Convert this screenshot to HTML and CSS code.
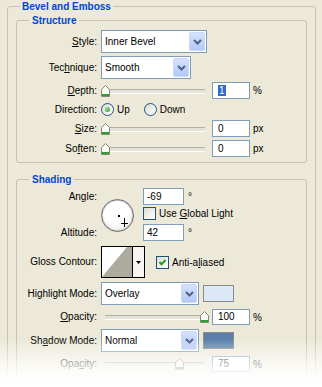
FILE: index.html
```html
<!DOCTYPE html>
<html lang="en">
<head>
    <meta charset="UTF-8">
    <meta name="viewport" content="width=device-width, initial-scale=1.0">
    <title>Layer Style - Bevel and Emboss</title>
    <link rel="stylesheet" href="styles.css">
</head>
<body>
    <fieldset class="group">
        <legend>Bevel and Emboss</legend>

        <fieldset class="sub structure">
            <legend>Structure</legend>
            <div class="rows structure-rows">
                <span class="lbl tall"><u>S</u>tyle:</span>
                <div class="select w-style">
                    <span class="val">Inner Bevel</span>
                    <span class="drop"><svg width="9" height="6" viewBox="0 0 9 6"><path d="M1 1l3.5 3.5L8 1" fill="none" stroke="#4d6185" stroke-width="2"/></svg></span>
                </div>

                <span class="lbl tall">Tec<u>h</u>nique:</span>
                <div class="select w-tech">
                    <span class="val">Smooth</span>
                    <span class="drop"><svg width="9" height="6" viewBox="0 0 9 6"><path d="M1 1l3.5 3.5L8 1" fill="none" stroke="#4d6185" stroke-width="2"/></svg></span>
                </div>

                <span class="lbl"><u>D</u>epth:</span>
                <div class="line">
                    <div class="slider"><span class="thumb" style="left: 0px"><svg width="9" height="12" viewBox="0 0 9 12"><path d="M.5 4.5l4-4 4 4v7h-8z" fill="#fbfbf8" stroke="#858579"/><path d="M1 9h7v2H1z" fill="#2e9e2e"/></svg></span></div>
                    <span class="field"><span class="sel">1</span></span>
                    <span class="unit">%</span>
                </div>

                <span class="lbl">Direction:</span>
                <div class="line">
                    <span class="opt"><span class="radio on"></span><span>Up</span></span>
                    <span class="opt"><span class="radio"></span><span>Down</span></span>
                </div>

                <span class="lbl"><u>S</u>ize:</span>
                <div class="line">
                    <div class="slider"><span class="thumb" style="left: 0px"><svg width="9" height="12" viewBox="0 0 9 12"><path d="M.5 4.5l4-4 4 4v7h-8z" fill="#fbfbf8" stroke="#858579"/><path d="M1 9h7v2H1z" fill="#2e9e2e"/></svg></span></div>
                    <span class="field">0</span>
                    <span class="unit">px</span>
                </div>

                <span class="lbl">So<u>f</u>ten:</span>
                <div class="line">
                    <div class="slider"><span class="thumb" style="left: 0px"><svg width="9" height="12" viewBox="0 0 9 12"><path d="M.5 4.5l4-4 4 4v7h-8z" fill="#fbfbf8" stroke="#858579"/><path d="M1 9h7v2H1z" fill="#2e9e2e"/></svg></span></div>
                    <span class="field">0</span>
                    <span class="unit">px</span>
                </div>
            </div>
        </fieldset>

        <fieldset class="sub shading">
            <legend>Shading</legend>
            <div class="rows shading-rows">
                <div class="angle-block">
                    <span class="lbl a-row1">Angle:</span>
                    <div class="dial">
                        <span class="dot"></span>
                        <svg class="cursor" width="7" height="9" viewBox="0 0 7 9"><path d="M3.5 0v9M0 5.5h7" stroke="#000" stroke-width="1"/></svg>
                    </div>
                    <div class="line a-row1 c3">
                        <span class="field small">-69</span>
                        <span class="deg">°</span>
                    </div>
                    <div class="line a-row2 c3">
                        <span class="check"></span>
                        <span>Use <u>G</u>lobal Light</span>
                    </div>
                    <span class="lbl a-row3">Altitude:</span>
                    <div class="line a-row3 c3">
                        <span class="field small">42</span>
                        <span class="deg">°</span>
                    </div>
                </div>

                <span class="lbl contour-lbl">Gloss Contour:</span>
                <div class="line contour-line">
                    <div class="contour">
                        <svg width="30" height="30" viewBox="0 0 30 30"><rect width="30" height="30" fill="#fff"/><path d="M0 30L25 0h5v30z" fill="#adab9d"/></svg>
                        <span class="contour-drop"><svg width="5" height="3" viewBox="0 0 5 3"><path d="M0 0h5L2.5 3z" fill="#000"/></svg></span>
                    </div>
                    <span class="check on"><svg width="11" height="11" viewBox="0 0 11 11"><path d="M2.5 5l2 2.2L8.5 3" fill="none" stroke="#21a121" stroke-width="2"/></svg></span>
                    <span>Anti-a<u>l</u>iased</span>
                </div>

                <span class="lbl tall">Highlight Mode:</span>
                <div class="line tall-line">
                    <div class="select w-mode">
                        <span class="val">Overlay</span>
                        <span class="drop"><svg width="9" height="6" viewBox="0 0 9 6"><path d="M1 1l3.5 3.5L8 1" fill="none" stroke="#4d6185" stroke-width="2"/></svg></span>
                    </div>
                    <span class="swatch highlight"></span>
                </div>

                <span class="lbl mid"><u>O</u>pacity:</span>
                <div class="line mid-line">
                    <div class="slider"><span class="thumb" style="left: calc((100% - 9px) * 1)"><svg width="9" height="12" viewBox="0 0 9 12"><path d="M.5 4.5l4-4 4 4v7h-8z" fill="#fbfbf8" stroke="#858579"/><path d="M1 9h7v2H1z" fill="#2e9e2e"/></svg></span></div>
                    <span class="field mid">100</span>
                    <span class="unit">%</span>
                </div>

                <span class="lbl tall">Sh<u>a</u>dow Mode:</span>
                <div class="line tall-line">
                    <div class="select w-mode">
                        <span class="val">Normal</span>
                        <span class="drop"><svg width="9" height="6" viewBox="0 0 9 6"><path d="M1 1l3.5 3.5L8 1" fill="none" stroke="#4d6185" stroke-width="2"/></svg></span>
                    </div>
                    <span class="swatch shadow"></span>
                </div>

                <span class="lbl mid">Opa<u>c</u>ity:</span>
                <div class="line mid-line">
                    <div class="slider"><span class="thumb" style="left: calc((100% - 9px) * 0.75)"><svg width="9" height="12" viewBox="0 0 9 12"><path d="M.5 4.5l4-4 4 4v7h-8z" fill="#fbfbf8" stroke="#858579"/><path d="M1 9h7v2H1z" fill="#2e9e2e"/></svg></span></div>
                    <span class="field mid">75</span>
                    <span class="unit">%</span>
                </div>
            </div>
        </fieldset>
    </fieldset>

    <div class="fade"></div>
</body>
</html>
```

FILE: styles.css
```css
* {
    box-sizing: border-box;
}

body {
    margin: 0;
    height: 387px;
    overflow: hidden;
    position: relative;
    background: #ece9d8;
    font-family: "Liberation Sans", Arial, sans-serif;
    font-size: 10px;
    color: #000;
}

fieldset {
    min-width: 0;
    border: 1px solid #c5c2b2;
    border-radius: 3px;
}

legend {
    color: #0046d5;
    font-weight: bold;
    line-height: 13px;
}

.group {
    margin: 0 6px 0 7px;
    padding: 1px 8px 3px;
}

.group > legend {
    margin-left: 4px;
    padding: 0 2px;
}

.sub {
    margin: 0;
    padding: 3px 0 5px;
}

.sub > legend {
    margin-left: 12px;
    padding: 0 3px;
}

.shading {
    margin-top: 10px;
    padding: 2px 0 6px;
}

/* label / control grid */
.rows {
    display: grid;
    grid-template-columns: 80px 1fr;
    column-gap: 4px;
    align-items: start;
}

.structure-rows {
    grid-template-rows: 26px 26px 19px 19px 20px 17px;
}

.shading-rows {
    row-gap: 4px;
}

.lbl {
    text-align: right;
    white-space: nowrap;
    line-height: 17px;
}

.lbl.tall {
    line-height: 23px;
}

.lbl.mid {
    line-height: 16px;
}

.line {
    display: flex;
    align-items: center;
    height: 17px;
    white-space: nowrap;
}

.tall-line {
    height: 23px;
}

.mid-line {
    height: 16px;
}

/* combo boxes */
.select {
    display: flex;
    height: 23px;
    border: 1px solid #7f9db9;
    background: #fff;
}

.select .val {
    flex: 1;
    padding-left: 3px;
    line-height: 21px;
}

.select .drop {
    width: 16px;
    margin: 1px;
    border: 1px solid #c8d7fb;
    border-radius: 2px;
    background: linear-gradient(#d6e2fd, #b3c8f6);
    display: flex;
    align-items: center;
    justify-content: center;
}

.w-style { width: 106px; }
.w-tech { width: 90px; }
.w-mode { width: 98px; }

/* sliders */
.slider {
    position: relative;
    width: 108px;
    height: 12px;
    margin-right: 3px;
}

.slider::before {
    content: "";
    position: absolute;
    left: 4px;
    right: 4px;
    top: 4px;
    height: 3px;
    border-top: 1px solid #b3b1a3;
    border-bottom: 1px solid #fff;
    background: #e4e2d6;
}

.thumb {
    position: absolute;
    top: 0;
    width: 9px;
    height: 12px;
}

.thumb svg {
    display: block;
}

/* text fields */
.field {
    width: 38px;
    height: 17px;
    border: 1px solid #7f9db9;
    background: #fff;
    padding-left: 5px;
    line-height: 15px;
}

.field.mid {
    height: 16px;
    line-height: 14px;
}

.field.small {
    width: 41px;
    padding-left: 3px;
}

.sel {
    background: #316ac5;
    color: #fff;
    padding: 0 1px;
}

.unit {
    margin-left: 3px;
}

.deg {
    margin-left: 4px;
}

/* radios and checkboxes */
.opt {
    display: flex;
    align-items: center;
    gap: 3px;
    margin-right: 14px;
}

.radio {
    width: 13px;
    height: 13px;
    border-radius: 50%;
    border: 1px solid #1c5180;
    background: linear-gradient(135deg, #dcdcd5, #fff);
    display: flex;
    align-items: center;
    justify-content: center;
}

.radio.on::after {
    content: "";
    width: 5px;
    height: 5px;
    border-radius: 50%;
    background: radial-gradient(circle at 35% 35%, #8ee08e, #21a121);
}

.check {
    width: 13px;
    height: 13px;
    border: 1px solid #1c5180;
    background: linear-gradient(135deg, #dcdcd5, #fff);
    margin-right: 3px;
    display: flex;
    align-items: center;
    justify-content: center;
}

/* angle dial */
.angle-block {
    grid-column: 1 / -1;
    display: grid;
    grid-template-columns: 80px 38px 1fr;
    grid-template-rows: 19px 17px 18px;
    column-gap: 4px;
    align-items: start;
}

.a-row1 { grid-row: 1; }
.a-row2 { grid-row: 2; height: 13px; }
.a-row3 { grid-row: 3; }
.c3 { grid-column: 3; }
.angle-block .lbl { grid-column: 1; }

.dial {
    grid-column: 2;
    grid-row: 1 / 4;
    align-self: center;
    width: 33px;
    height: 33px;
    border-radius: 50%;
    border: 1px solid #6e6e6e;
    box-shadow: inset 0 0 0 1px #c9c9c9;
    background: radial-gradient(circle at 45% 35%, #fff 45%, #dedede 100%);
    position: relative;
}

.dial .dot {
    position: absolute;
    left: 16px;
    top: 15px;
    width: 2px;
    height: 2px;
    background: #000;
}

.dial .cursor {
    position: absolute;
    left: 19px;
    top: 18px;
}

/* gloss contour */
.contour-lbl {
    line-height: 32px;
}

.contour-line {
    height: 32px;
}

.contour {
    display: flex;
    width: 44px;
    height: 32px;
    border: 1px solid #000;
    background: #f6f5f0;
    margin-right: 11px;
}

.contour svg {
    display: block;
}

.contour-drop {
    flex: 1;
    border-left: 1px solid #000;
    display: flex;
    align-items: center;
    justify-content: center;
}

/* colour swatches */
.swatch {
    width: 31px;
    height: 17px;
    border: 1px solid #8a8a8a;
    margin-left: 4px;
}

.swatch.highlight {
    background: #dbe8f8;
}

.swatch.shadow {
    background: #5a80ab;
}

/* bottom fade of the screenshot */
.fade {
    position: absolute;
    left: 0;
    right: 0;
    bottom: 0;
    height: 48px;
    background: linear-gradient(rgba(255, 255, 255, 0), rgba(255, 255, 255, 0.55) 40%, rgba(255, 255, 255, 0.92) 75%, #fff);
    pointer-events: none;
}
```
